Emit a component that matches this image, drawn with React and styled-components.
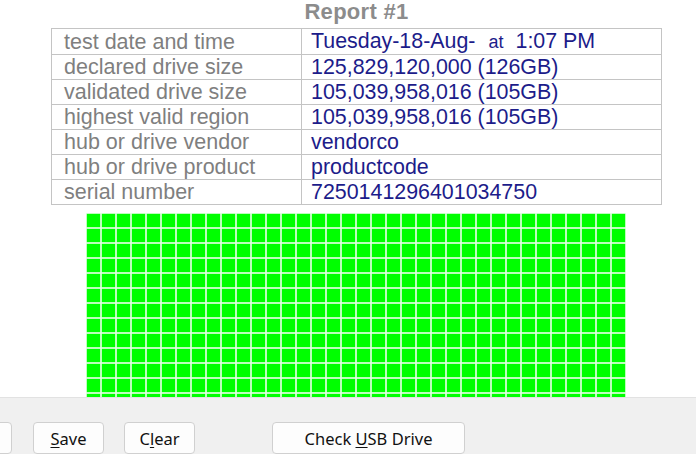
import React from 'react';
import styled, { createGlobalStyle } from 'styled-components';

const GlobalStyle = createGlobalStyle`
    html, body {
        margin: 0;
        padding: 0;
        background: #ffffff;
        overflow: hidden;
    }
`;

const rows = [
    { label: 'test date and time', value: 'date' },
    { label: 'declared drive size', value: '125,829,120,000 (126GB)' },
    { label: 'validated drive size', value: '105,039,958,016 (105GB)' },
    { label: 'highest valid region', value: '105,039,958,016 (105GB)' },
    { label: 'hub or drive vendor', value: 'vendorco' },
    { label: 'hub or drive product', value: 'productcode' },
    { label: 'serial number', value: '7250141296401034750' },
];

const COLS = 36;
const ROWS = 14;

const App = () => {
    const blocks = Array.from({ length: COLS * ROWS });

    return (
        <Window>
            <GlobalStyle />
            <ReportArea>
                <Report>
                    <Title>Report #1</Title>
                    <InfoTable>
                        <tbody>
                            {rows.map((row) => (
                                <tr key={row.label}>
                                    <Label>{row.label}</Label>
                                    <Value>
                                        {row.value === 'date' ? (
                                            <>
                                                Tuesday-18-Aug-<Small $gap="13px">at</Small><Time>1:07 PM</Time>
                                            </>
                                        ) : (
                                            row.value
                                        )}
                                    </Value>
                                </tr>
                            ))}
                        </tbody>
                    </InfoTable>
                    <BlockMap>
                        {blocks.map((_, i) => (
                            <Block key={i} $state="ok" />
                        ))}
                    </BlockMap>
                </Report>
            </ReportArea>
            <ButtonBar>
                <Button $offset="-59px" $width="71px">&nbsp;</Button>
                <Button $offset="21px" $width="71px"><u>S</u>ave</Button>
                <Button $offset="20px" $width="71px">C<u>l</u>ear</Button>
                <Button $offset="77px" $width="193px">Check <u>U</u>SB Drive</Button>
            </ButtonBar>
        </Window>
    );
};

const Window = styled.div`
    width: 696px;
    height: 454px;
    display: flex;
    flex-direction: column;
    overflow: hidden;
    font-family: "Liberation Sans", Arial, sans-serif;
`;

const ReportArea = styled.div`
    height: 397px;
    flex-shrink: 0;
    overflow: hidden;
    background: #ffffff;
    padding-left: 51px;
`;

const Report = styled.div`
    width: 611px;
    display: flex;
    flex-direction: column;
    align-items: center;
`;

const Title = styled.div`
    height: 28px;
    font-size: 22px;
    font-weight: bold;
    color: #8c8c8c;
    line-height: 24px;
    letter-spacing: 0.3px;
`;

const InfoTable = styled.table`
    width: 611px;
    border-collapse: collapse;
    border: 1px solid #c4c4c4;
    table-layout: fixed;
`;

const Label = styled.td`
    width: 237px;
    height: 24px;
    padding: 0 0 0 12px;
    border: 1px solid #c4c4c4;
    font-size: 21.5px;
    line-height: 24px;
    color: #7f7f7f;
    white-space: nowrap;
`;

const Value = styled.td`
    height: 24px;
    padding: 0 0 0 9px;
    border: 1px solid #c4c4c4;
    font-size: 21.4px;
    line-height: 24px;
    color: #1c1c8a;
    white-space: nowrap;
`;

const Small = styled.span`
    font-size: 18px;
    margin-left: ${(p) => p.$gap};
`;

const Time = styled.span`
    margin-left: 12px;
`;

const BlockMap = styled.div`
    margin-top: 9px;
    margin-left: -1px;
    display: grid;
    grid-template-columns: repeat(${COLS}, 13px);
    grid-auto-rows: 13px;
    gap: 2px;
`;

const Block = styled.div`
    background: ${(p) => (p.$state === 'ok' ? '#00ff00' : '#ff0000')};
    box-shadow: 0 0 0 0.5px ${(p) => (p.$state === 'ok' ? '#7dff7d' : '#ff7d7d')};
`;

const ButtonBar = styled.div`
    flex: 1;
    display: flex;
    align-items: flex-start;
    padding-top: 24px;
    background: #f0f0f0;
    border-top: 1px solid #e2e2e2;
    box-sizing: border-box;
`;

const Button = styled.button`
    flex-shrink: 0;
    margin-left: ${(p) => p.$offset};
    width: ${(p) => p.$width};
    height: 32px;
    background: #fdfdfd;
    border: 1px solid #d0d0d0;
    border-radius: 4px;
    font-family: "Noto Sans", "Open Sans", sans-serif;
    font-size: 16.5px;
    color: #111111;
    padding: 0;

    u {
        text-underline-offset: 2px;
    }
`;

export default App;
